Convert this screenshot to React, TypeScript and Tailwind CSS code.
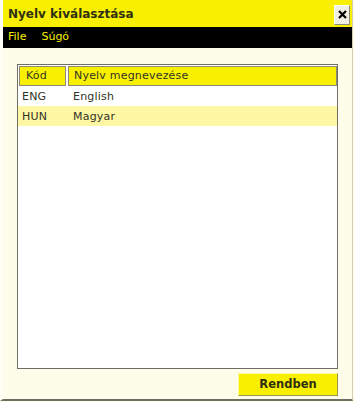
import React, { useState } from 'react';

const languages = [
  { code: 'ENG', name: 'English' },
  { code: 'HUN', name: 'Magyar' },
];

export default function App() {
  const [selected, setSelected] = useState('HUN');

  return (
    <div className="w-[355px] h-[402px] bg-[#fefdea] font-['DejaVu_Sans',Verdana,sans-serif] text-[#333326]">
      <div className="w-[353px] h-[401px] flex flex-col border-r border-[#cfcdbd] border-b-2 border-b-[#6e6e64] border-l-[3px] border-l-[#fffff6]">
        {/* Title bar */}
        <div className="h-[27px] bg-[#f8f000] flex items-center justify-between pl-[5px] pr-[2px] shrink-0">
          <span className="text-[12px] font-bold text-[#303010] mt-[1px]">Nyelv kiválasztása</span>
          <button className="w-[16px] h-[20px] mt-[2px] bg-[#f1efe4] border border-t-white border-l-white border-r-[#8c8a7c] border-b-[#8c8a7c] flex items-center justify-center">
            <svg width="9" height="9" viewBox="0 0 9 9">
              <path d="M1 1 L8 8 M8 1 L1 8" stroke="#000" strokeWidth="2.2" />
            </svg>
          </button>
        </div>

        {/* Menu bar */}
        <div className="h-[21px] bg-black flex items-center gap-[15px] pl-[5px] text-[11px] text-[#f8f000] shrink-0">
          <span>File</span>
          <span>Súgó</span>
        </div>

        {/* Body */}
        <div className="flex-1 flex flex-col pl-[14px] pr-[14px] pt-[16px]">
          <div className="h-[305px] bg-white border border-[#6e6e64] flex flex-col">
            <div className="flex gap-[2px] pl-[1px] pt-[1px] h-[21px] shrink-0">
              <div className="w-[47px] bg-[#f8f000] border border-[#8c8a70] pl-[6px] text-[11px] tracking-[0.2px] flex items-center">Kód</div>
              <div className="flex-1 bg-[#f8f000] border border-[#8c8a70] pl-[5px] text-[11px] tracking-[0.2px] flex items-center">Nyelv megnevezése</div>
            </div>
            {languages.map(l => (
              <div
                key={l.code}
                onClick={() => setSelected(l.code)}
                className={`flex h-[20px] items-center pt-[3px] text-[11px] tracking-[0.2px] ${selected === l.code ? 'bg-[#fdf7a4]' : 'bg-white'}`}
              >
                <span className="w-[55px] pl-[4px]">{l.code}</span>
                <span>{l.name}</span>
              </div>
            ))}
          </div>

          <div className="flex justify-end mt-[4px]">
            <button className="w-[100px] h-[23px] bg-[#f8f000] border border-t-[#fcfa9a] border-l-[#fcfa9a] border-r-[#9a9650] border-b-[#9a9650] text-[11.5px] font-bold text-[#303010]">
              Rendben
            </button>
          </div>
        </div>
      </div>
    </div>
  );
}
